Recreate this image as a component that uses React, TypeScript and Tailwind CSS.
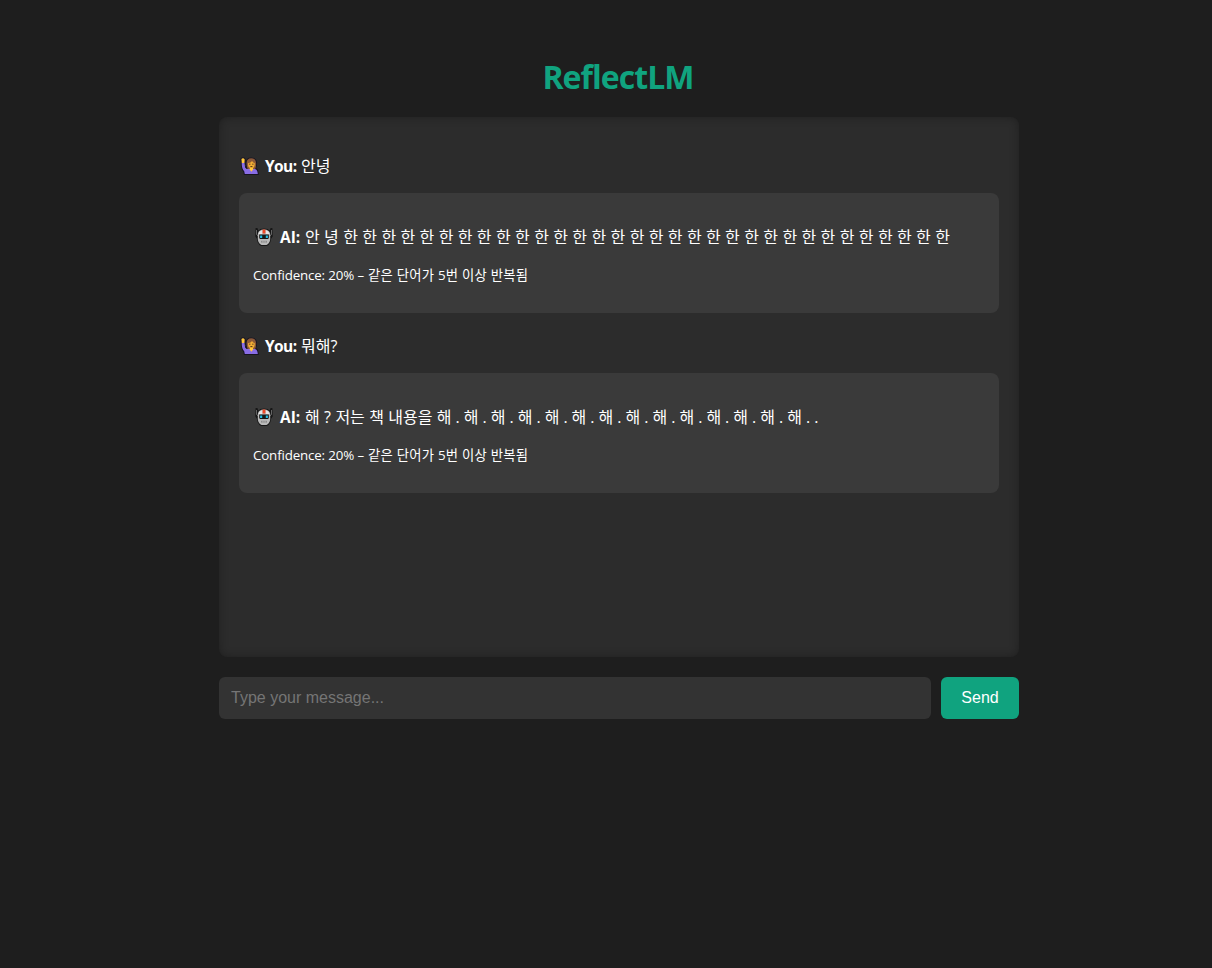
import React from "react";

function HandIcon() {
  return (
    <svg viewBox="0 0 20 20" className="block h-5 w-5 shrink-0" aria-hidden="true">
      <path d="M1.5 4Q1.2 1.4 3.2 1.4L5.4 1.6Q7 2.3 6.7 5L6.3 6.7 6.8 11 7.6 11.6Q6.3 9 6.6 6.4 7.2 1.5 12.2 1.4 17.6 1.5 18 6.5 18.2 9.4 17.1 12 19.6 13 19.8 19H4.9L4.3 15.8Q1.7 13 1.8 7Z" fill="#171321" />
      <path d="M2.7 6.8H5.5L6.1 11.6 7.6 13H16Q18.5 13.4 18.8 18H5.8L5.2 15.3Q2.6 12.4 2.7 6.8Z" fill="#886ce4" />
      <path d="M2.4 3Q3.4 1.8 5 2.5 6.1 3.2 5.6 5L5.4 7H2.8Z" fill="#ffc83d" />
      <path d="M7.6 6.8Q7.8 2.5 12.3 2.3 16.9 2.5 17.1 6.8 17.3 10.4 16.2 13H8.6Q7.4 10 7.6 6.8Z" fill="#8b5938" />
      <path d="M9.1 7.3Q11.8 6.8 13.1 4.9 14 6.7 15.7 7.1V9Q15.3 12.4 12.4 12.4 9.3 12.3 9.1 9.1Z" fill="#f0ad35" />
      <path d="M11 11.8H13.8L14.3 13.2 12.4 15.7 10.5 13.2Z" fill="#ffc83d" />
      <path d="M10.8 7.6v1.2M13.9 7.6v1.2M11.4 10.6h2" stroke="#4b321b" strokeWidth="1" fill="none" />
    </svg>
  );
}

function RobotIcon() {
  return (
    <svg viewBox="0 0 20 20" className="block h-5 w-5 shrink-0" aria-hidden="true">
      <path d="M1.6 1H3.4L4.4 3.6 6.4 2.1Q10 .9 13.6 2.1L15.6 3.6 16.6 1H18.4L18.7 9.6 17.1 11.8Q17 15.8 14.5 18L12.9 19.1H7.1L5.5 18Q3 15.8 2.9 11.8L1.3 9.6Z" fill="#171717" />
      <path d="M2.5 3v4.5L4.2 9M17.5 3v4.5L15.8 9" stroke="#777" strokeWidth=".8" fill="none" />
      <path d="M3.8 7Q4.4 2.6 10 2.5 15.6 2.6 16.2 7V12Q16 16 12.5 18H7.5Q4 16 3.8 12Z" fill="#b9b9b9" />
      <path d="M4.7 6.5Q5.3 3.8 8.3 3.3V7H4.5ZM15.3 6.5Q14.7 3.8 11.7 3.3V7H15.5Z" fill="#e6e6e6" />
      <path d="M8.6 2.5h2.8v4H8.6Z" fill="#ef4927" />
      <path d="M5.2 7.6H14.8V11.3L13.8 12H6.2L5.2 11.3Z" fill="#171717" />
      <path d="M6.1 8.6h2.1v2.3H6.1ZM11.8 8.6h2.1v2.3H11.8Z" fill="#20bce5" />
      <path d="M7.1 13.8h5.8v1.8H7.1Z" fill="#858585" />
      <path d="M8.7 13.8v1.8M10 13.8v1.8M11.3 13.8v1.8" stroke="#d5d5d5" strokeWidth=".45" />
    </svg>
  );
}

function UserMessage({ text }: { text: string }) {
  return (
    <p className="flex h-6 items-center">
      <HandIcon />
      <strong className="ml-[6px] w-[36px] whitespace-nowrap text-[15.5px] font-bold tracking-[-0.6px]">You:</strong>
      <span className="whitespace-nowrap">{text}</span>
    </p>
  );
}

function AiMessage({ text, repeated }: { text: string; repeated: string }) {
  return (
    <div className="h-[120px] rounded-lg bg-[#3a3a3a] px-[14px] pt-8">
      <p className="flex h-6 items-center">
        <span className="ml-px"><RobotIcon /></span>
        <strong className="ml-[6px] w-[25px] whitespace-nowrap text-[15.5px] font-bold">AI:</strong>
        <span className="whitespace-nowrap [word-spacing:0.22px]">
          {text}
          <span className="[word-spacing:-0.14px]">{repeated}</span>
        </span>
      </p>
      <p className="mt-[16px] flex h-5 items-center whitespace-nowrap text-[13.33px]">
        <span className="w-[115px] tracking-[-0.15px]">Confidence: 20% –</span>
        <span className="tracking-[0.24px]">같은 단어가 5번 이상 반복됨</span>
      </p>
    </div>
  );
}

const firstReply = "안 녕 " + Array(32).fill("한").join(" ");
const repeatedReply = Array(14).fill("해 .").join(" ") + " .";

export default function App() {
  return (
    <div className="min-h-screen bg-[#1e1e1e] pl-[219px] font-['Open_Sans','Noto_Sans_CJK_KR',sans-serif] text-base leading-6 text-white">
      <main className="w-[800px] pt-[55px]">
        <h1 className="flex h-[44px] items-center justify-center pr-[2px] text-[32px] font-bold tracking-[-0.95px] text-[#10a37f]">ReflectLM</h1>
        <section className="mt-[18px] h-[540px] rounded-lg bg-[#2c2c2c] px-5 pt-[37px] shadow-[inset_0_0_10px_rgba(0,0,0,0.3)]">
          <UserMessage text="안녕" />
          <div className="mt-[15px]"><AiMessage text={firstReply} repeated="" /></div>
          <div className="mt-[21px]"><UserMessage text="뭐해?" /></div>
          <div className="mt-[15px]"><AiMessage text="해 ? 저는 책 내용을 " repeated={repeatedReply} /></div>
        </section>
        <form className="mt-5 flex h-[42px] gap-[10px] font-['Liberation_Sans',sans-serif]" onSubmit={(e) => e.preventDefault()}>
          <input className="min-w-0 flex-1 rounded-md bg-[#333333] px-3 text-base text-white outline-none placeholder:text-[#757575]" placeholder="Type your message..." />
          <button className="w-[78px] rounded-md bg-[#10a37f] text-base text-white">Send</button>
        </form>
      </main>
    </div>
  );
}
